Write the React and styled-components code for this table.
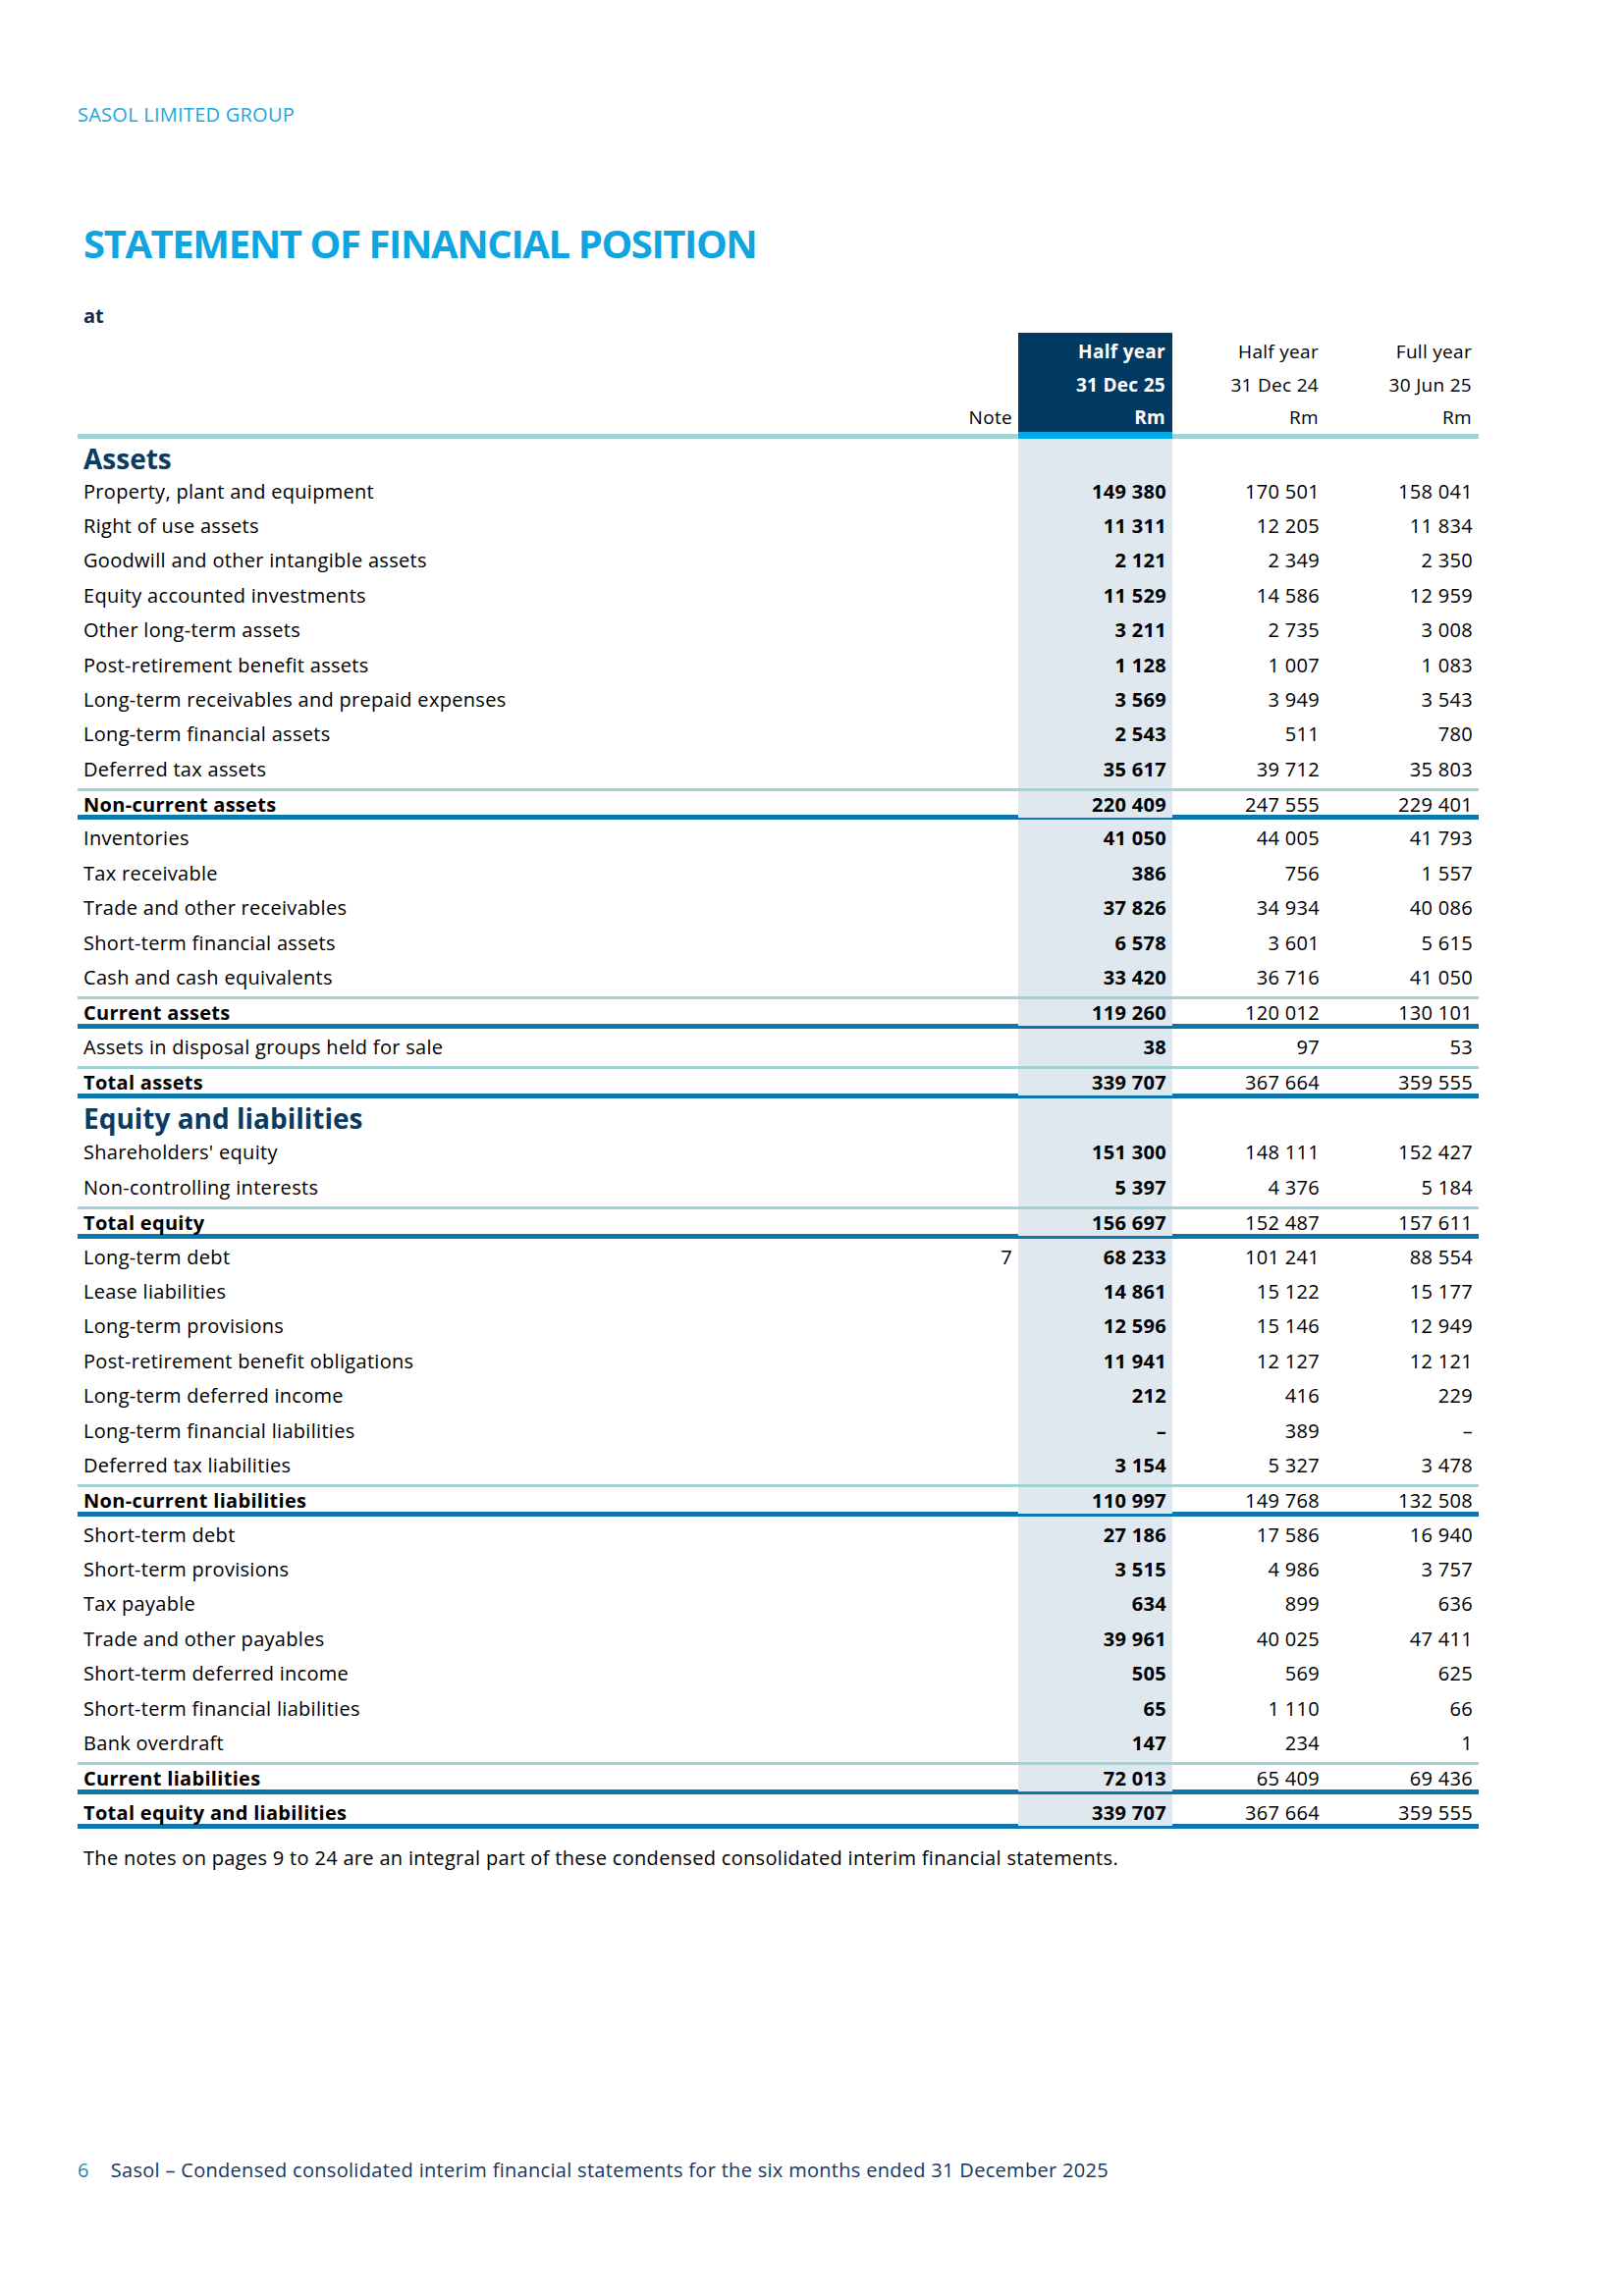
import styled, { createGlobalStyle } from 'styled-components';

const COLS = '1fr 80px 157px 156px 156px';

const ROWS = [
  { heading: 'Assets', h: 34.5 },
  { label: 'Property, plant and equipment', values: ['149 380', '170 501', '158 041'] },
  { label: 'Right of use assets', values: ['11 311', '12 205', '11 834'] },
  { label: 'Goodwill and other intangible assets', values: ['2 121', '2 349', '2 350'] },
  { label: 'Equity accounted investments', values: ['11 529', '14 586', '12 959'] },
  { label: 'Other long-term assets', values: ['3 211', '2 735', '3 008'] },
  { label: 'Post-retirement benefit assets', values: ['1 128', '1 007', '1 083'] },
  { label: 'Long-term receivables and prepaid expenses', values: ['3 569', '3 949', '3 543'] },
  { label: 'Long-term financial assets', values: ['2 543', '511', '780'] },
  { label: 'Deferred tax assets', values: ['35 617', '39 712', '35 803'], rule: 'light' },
  { label: 'Non-current assets', values: ['220 409', '247 555', '229 401'], rule: 'thick', total: true, tight: true },
  { label: 'Inventories', values: ['41 050', '44 005', '41 793'] },
  { label: 'Tax receivable', values: ['386', '756', '1 557'] },
  { label: 'Trade and other receivables', values: ['37 826', '34 934', '40 086'] },
  { label: 'Short-term financial assets', values: ['6 578', '3 601', '5 615'] },
  { label: 'Cash and cash equivalents', values: ['33 420', '36 716', '41 050'], rule: 'light' },
  { label: 'Current assets', values: ['119 260', '120 012', '130 101'], rule: 'thick', total: true, tight: true },
  { label: 'Assets in disposal groups held for sale', values: ['38', '97', '53'], rule: 'light' },
  { label: 'Total assets', values: ['339 707', '367 664', '359 555'], rule: 'thick', total: true, tight: true },
  { heading: 'Equity and liabilities', h: 36.8 },
  { label: "Shareholders' equity", values: ['151 300', '148 111', '152 427'] },
  { label: 'Non-controlling interests', values: ['5 397', '4 376', '5 184'], rule: 'light' },
  { label: 'Total equity', values: ['156 697', '152 487', '157 611'], rule: 'thick', total: true, tight: true },
  { label: 'Long-term debt', note: '7', values: ['68 233', '101 241', '88 554'] },
  { label: 'Lease liabilities', values: ['14 861', '15 122', '15 177'] },
  { label: 'Long-term provisions', values: ['12 596', '15 146', '12 949'] },
  { label: 'Post-retirement benefit obligations', values: ['11 941', '12 127', '12 121'] },
  { label: 'Long-term deferred income', values: ['212', '416', '229'] },
  { label: 'Long-term financial liabilities', values: ['–', '389', '–'] },
  { label: 'Deferred tax liabilities', values: ['3 154', '5 327', '3 478'], rule: 'light' },
  { label: 'Non-current liabilities', values: ['110 997', '149 768', '132 508'], rule: 'thick', total: true, tight: true },
  { label: 'Short-term debt', values: ['27 186', '17 586', '16 940'] },
  { label: 'Short-term provisions', values: ['3 515', '4 986', '3 757'] },
  { label: 'Tax payable', values: ['634', '899', '636'] },
  { label: 'Trade and other payables', values: ['39 961', '40 025', '47 411'] },
  { label: 'Short-term deferred income', values: ['505', '569', '625'] },
  { label: 'Short-term financial liabilities', values: ['65', '1 110', '66'] },
  { label: 'Bank overdraft', values: ['147', '234', '1'], rule: 'light' },
  { label: 'Current liabilities', values: ['72 013', '65 409', '69 436'], rule: 'thick', total: true, tight: true },
  { label: 'Total equity and liabilities', values: ['339 707', '367 664', '359 555'], rule: 'thick', total: true }
];

const HEADER = [
  ['Half year', '31 Dec 25', 'Rm'],
  ['Half year', '31 Dec 24', 'Rm'],
  ['Full year', '30 Jun 25', 'Rm']
];

export default function App() {
  return (
    <>
      <GlobalStyle />
      <Page>
        <Brand>SASOL LIMITED GROUP</Brand>
        <Title>STATEMENT OF FINANCIAL POSITION</Title>
        <AtLine>at</AtLine>

        <Table>
          <HeaderRow>
            <span />
            <NoteHead>Note</NoteHead>
            {HEADER.map((lines, i) => (
              <HeaderCell key={i} $current={i === 0}>
                {lines.map((line) => (
                  <HeaderLine key={line}>{line}</HeaderLine>
                ))}
              </HeaderCell>
            ))}
          </HeaderRow>
          <HeaderRule>
            <span />
            <CyanBar />
          </HeaderRule>

          {ROWS.map((row, i) =>
            row.heading ? (
              <HeadingRow key={i} $h={row.h}>
                <SectionTitle>{row.heading}</SectionTitle>
                <ValueCell $current />
              </HeadingRow>
            ) : (
              <Row key={i} $rule={row.rule} $tight={row.tight}>
                <LabelCell $tight={row.tight} $total={row.total}>
                  {row.label}
                </LabelCell>
                <NoteCell $tight={row.tight}>{row.note}</NoteCell>
                {row.values.map((v, j) => (
                  <ValueCell key={j} $current={j === 0} $tight={row.tight}>
                    {v}
                  </ValueCell>
                ))}
              </Row>
            )
          )}
        </Table>

        <Footnote>
          The notes on pages 9 to 24 are an integral part of these condensed consolidated interim
          financial statements.
        </Footnote>

        <Footer>
          <PageNo>6</PageNo>
          <span>Sasol – Condensed consolidated interim financial statements for the six months ended 31 December 2025</span>
        </Footer>
      </Page>
    </>
  );
}

// стили
const GlobalStyle = createGlobalStyle`
  body {
    margin: 0;
    background: #ffffff;
    font-family: "Open Sans", "Noto Sans", sans-serif;
    color: #000000;
  }
`;

const Page = styled.div`
  box-sizing: border-box;
  width: 1654px;
  height: 2339px;
  padding: 103px 148px 115px 79px;
  display: flex;
  flex-direction: column;
`;

const Brand = styled.div`
  font-size: 20px;
  line-height: 27px;
  color: #1ea6dc;
  letter-spacing: 0.25px;
`;

const Title = styled.h1`
  margin: 94px 0 0 6px;
  font-size: 40px;
  line-height: 48px;
  font-weight: 700;
  color: #0ea5e0;
  letter-spacing: -1.4px;
`;

const AtLine = styled.div`
  margin: 36px 0 0 6px;
  font-size: 20px;
  line-height: 27px;
  font-weight: 700;
  color: #0d2f52;
`;

const Table = styled.div`
  margin-top: 4px;
  display: flex;
  flex-direction: column;
  letter-spacing: 0.3px;
`;

const HeaderRow = styled.div`
  display: grid;
  grid-template-columns: ${COLS};
  align-items: end;
`;

const NoteHead = styled.div`
  box-sizing: border-box;
  height: 33.7px;
  padding: 5px 6px 0 0;
  line-height: 29px;
  font-size: 19px;
  text-align: right;
`;

const HeaderCell = styled.div`
  display: flex;
  flex-direction: column;
  text-align: right;
  font-size: 19px;
  font-weight: ${(p) => (p.$current ? 700 : 400)};
  color: ${(p) => (p.$current ? '#ffffff' : '#000000')};
  background: ${(p) => (p.$current ? '#033a64' : 'transparent')};
`;

const HeaderLine = styled.div`
  box-sizing: border-box;
  height: 33.7px;
  padding: 5px 7px 0 0;
  line-height: 29px;
`;

const HeaderRule = styled.div`
  display: grid;
  grid-template-columns: 1fr 80px 157px 312px;
  height: 7px;
  background: linear-gradient(to bottom, transparent 2px, #9fd3d6 2px);
`;

const CyanBar = styled.div`
  grid-column: 3;
  background: #00aae6;
`;

const Row = styled.div`
  display: grid;
  grid-template-columns: ${COLS};
  box-sizing: border-box;
  height: ${(p) => (p.$tight ? 29.9 : p.$rule === 'light' ? 40.9 : 35.4)}px;
  border-bottom: ${(p) =>
    p.$rule === 'thick'
      ? '5px solid #0b77b0'
      : p.$rule === 'light'
      ? '3px solid #9fd3d6'
      : 'none'};
  font-size: 20px;
`;

const Cell = styled.div`
  padding-top: ${(p) => (p.$tight ? 0 : 5)}px;
  line-height: 27px;
  white-space: nowrap;
`;

const LabelCell = styled(Cell)`
  padding-left: 6px;
  font-weight: ${(p) => (p.$total ? 700 : 400)};
`;

const NoteCell = styled(Cell)`
  padding-right: 6px;
  text-align: right;
`;

const ValueCell = styled(Cell)`
  padding-right: 6px;
  text-align: right;
  font-weight: ${(p) => (p.$current ? 700 : 400)};
  background: ${(p) => (p.$current ? '#dfe8ee' : 'transparent')};
`;

const HeadingRow = styled.div`
  display: grid;
  grid-template-columns: 1fr 157px 312px;
  height: ${(p) => p.$h}px;
`;

const SectionTitle = styled.div`
  padding: 3px 0 0 6px;
  font-size: 28px;
  line-height: 34px;
  font-weight: 700;
  color: #0c3a60;
  letter-spacing: 0;
`;

const Footnote = styled.p`
  margin: 16px 0 0 6px;
  font-size: 20px;
  line-height: 27px;
  letter-spacing: 0.32px;
`;

const Footer = styled.div`
  margin-top: auto;
  display: flex;
  gap: 22px;
  font-size: 20px;
  line-height: 27px;
  color: #17365d;
  letter-spacing: 0.3px;
`;

const PageNo = styled.span`
  color: #1c86b4;
`;
